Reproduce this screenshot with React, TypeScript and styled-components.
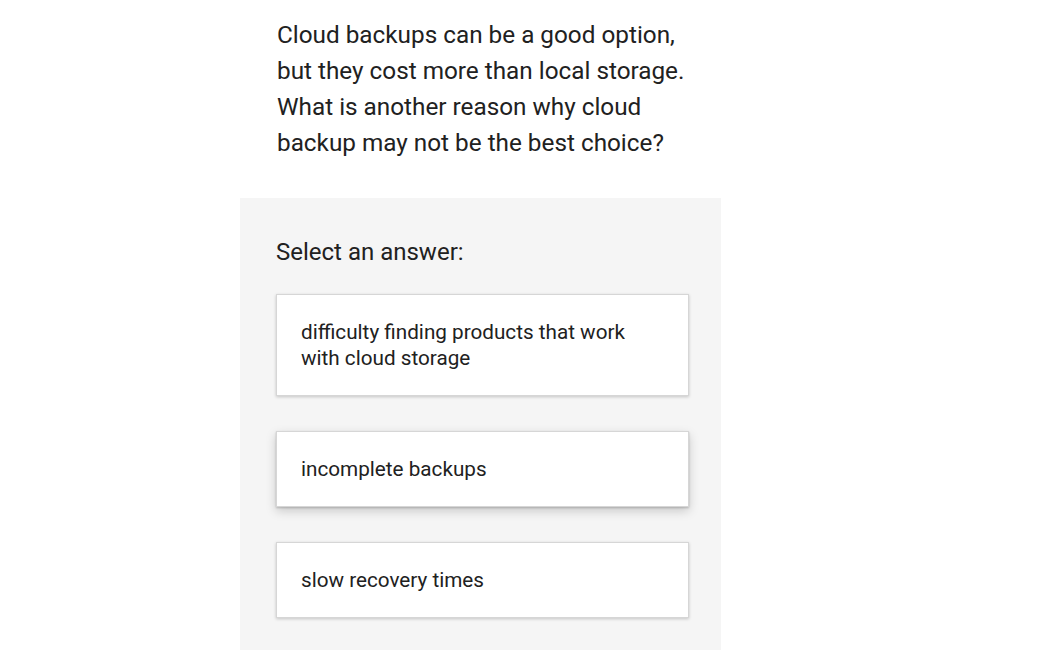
import styled, { createGlobalStyle } from "styled-components"

const GlobalStyle = createGlobalStyle`
    body {
        margin: 0;
        background: #ffffff;
        font-family: Roboto, "Liberation Sans", sans-serif;
        color: #212121;
    }
`

const StyledPage = styled.main`
    display: flex;
    flex-direction: column;
    width: 481px;
    margin-left: 240px;
    padding-top: 17px;
`

const Question = styled.p`
    margin: 0 0 37px;
    padding-left: 37px;
    font-size: 24.3px;
    line-height: 36px;
    color: #212121;
`

const AnswerPanel = styled.section`
    display: flex;
    flex-direction: column;
    gap: 35px;
    background-color: #f5f5f5;
    padding: 36px 32px 32px 36px;
`

const Prompt = styled.h2`
    margin: 0 0 -11px;
    font-size: 24px;
    font-weight: 400;
    line-height: 36px;
    color: #212121;
`

const AnswerCard = styled.button<{ $raised?: boolean }>`
    display: block;
    width: 413px;
    text-align: left;
    background-color: #ffffff;
    border: 1px solid #d6d6d6;
    padding: 24px;
    font-family: Roboto, "Liberation Sans", sans-serif;
    font-size: 20.7px;
    line-height: 26px;
    color: #212121;
    cursor: pointer;
    box-shadow: ${({ $raised }) =>
        $raised
            ? "0 4px 10px rgba(0, 0, 0, 0.18), 0 1px 2px rgba(0, 0, 0, 0.2)"
            : "0 1px 3px rgba(0, 0, 0, 0.2)"};
`

const answers = [
    "difficulty finding products that work with cloud storage",
    "incomplete backups",
    "slow recovery times",
]

const App = () => {
    return (
        <>
            <GlobalStyle />
            <StyledPage>
                <Question>
                    Cloud backups can be a good option,
                    <br />
                    but they cost more than local storage.
                    <br />
                    What is another reason why cloud
                    <br />
                    backup may not be the best choice?
                </Question>
                <AnswerPanel>
                    <Prompt>Select an answer:</Prompt>
                    {answers.map((answer, i) => (
                        <AnswerCard key={answer} $raised={i === 1}>
                            {i === 0 ? (
                                <>
                                    difficulty finding products that work
                                    <br />
                                    with cloud storage
                                </>
                            ) : (
                                answer
                            )}
                        </AnswerCard>
                    ))}
                </AnswerPanel>
            </StyledPage>
        </>
    )
}

export default App
